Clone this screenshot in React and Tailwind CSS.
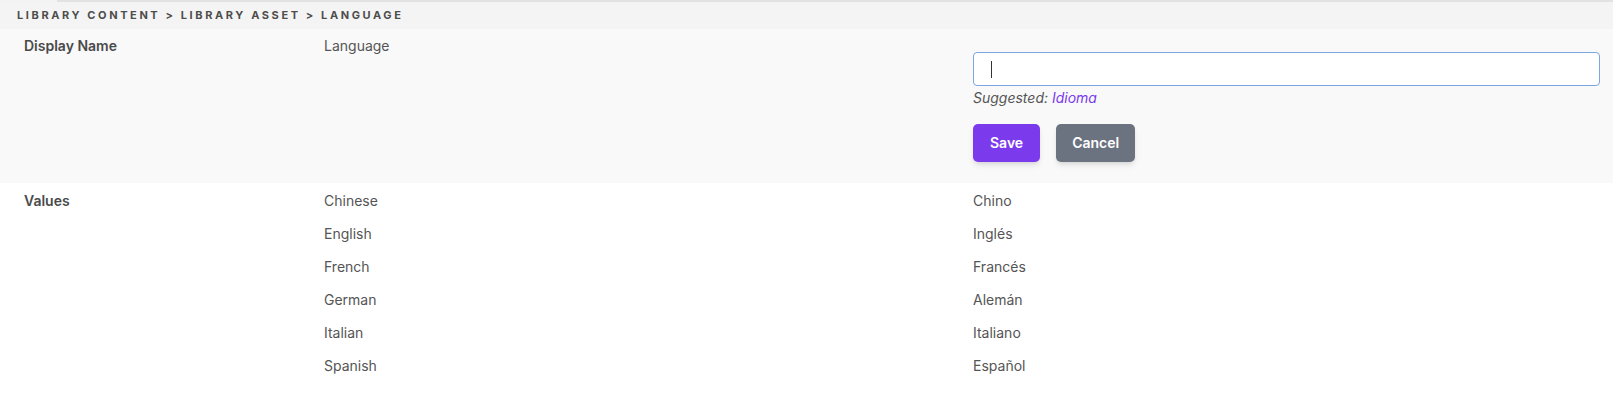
export default function App() {
  const values = [
    ["Chinese", "Chino"],
    ["English", "Inglés"],
    ["French", "Francés"],
    ["German", "Alemán"],
    ["Italian", "Italiano"],
    ["Spanish", "Español"],
  ];
  return (
    <div className="w-[1613px] h-[394px] bg-white text-[#555] overflow-hidden" style={{ fontFamily: "Inter, 'Noto Sans', sans-serif" }}>
      <div className="flex h-[2px]">
        <div className="w-[57px] bg-[#f3f3f3]" />
        <div className="flex-1 bg-[#e2e2e2]" />
      </div>
      <div className="h-[27px] bg-[#f4f4f4] pl-[17px] flex items-center">
        <span className="text-[11px] font-bold uppercase tracking-[2.6px] text-[#4d4d4d] leading-none">
          Library Content &gt; Library Asset &gt; Language
        </span>
      </div>
      <div className="grid grid-cols-[300px_649px_1fr] pl-6 pr-[13px] bg-[#f9f9f9] h-[154px]">
        <div className="py-1.5 text-sm leading-[21px] font-semibold text-[#4a4a4a]">Display Name</div>
        <div className="py-1.5 text-sm leading-[21px]">Language</div>
        <div className="pt-[23px] flex flex-col">
          <div className="h-[34px] bg-white border border-[#7aa7e0] rounded-[4px] flex items-center pl-[17px]">
            <div className="w-px h-[17px] bg-[#333]" />
          </div>
          <div className="mt-px text-sm leading-[21px] italic">
            Suggested: <span className="text-[#7c3aed]">Idioma</span>
          </div>
          <div className="mt-4 flex gap-4">
            <button className="h-[38px] px-[17px] rounded-[5px] bg-[#7c3aed] text-white text-sm font-semibold shadow-md">Save</button>
            <button className="h-[38px] px-4 rounded-[5px] bg-[#6b7280] text-white text-sm font-semibold shadow-md">Cancel</button>
          </div>
        </div>
      </div>
      <div className="grid grid-cols-[300px_649px_1fr] pl-6 pr-[13px] pt-px">
        <div className="py-1.5 text-sm leading-[21px] font-semibold text-[#4a4a4a]">Values</div>
        <div className="flex flex-col">
          {values.map(([en]) => (
            <div key={en} className="py-1.5 text-sm leading-[21px]">{en}</div>
          ))}
        </div>
        <div className="flex flex-col">
          {values.map(([en, es]) => (
            <div key={en} className="py-1.5 text-sm leading-[21px]">{es}</div>
          ))}
        </div>
      </div>
    </div>
  );
}
